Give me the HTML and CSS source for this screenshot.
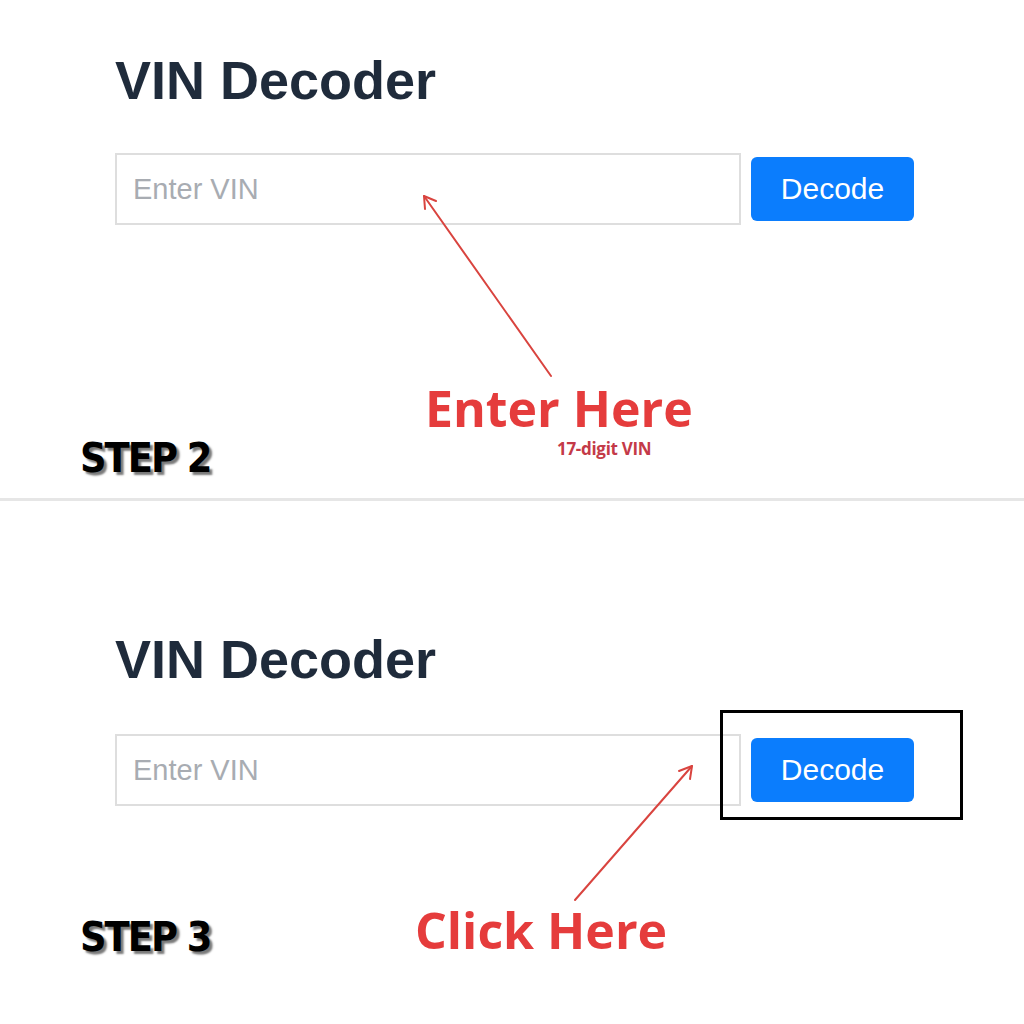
FILE: index.html
```html
<!DOCTYPE html>
<html lang="en">
<head>
    <meta charset="UTF-8">
    <meta name="viewport" content="width=device-width, initial-scale=1.0">
    <title>VIN Decoder Steps</title>
    <link rel="stylesheet" href="styles.css">
</head>
<body>
    <div class="page">
        <section class="step step-two">
            <h1 class="decoder-title">VIN Decoder</h1>
            <div class="decoder-form">
                <input class="vin-input" type="text" placeholder="Enter VIN">
                <button class="decode-btn">Decode</button>
            </div>
            <div class="callout callout-enter">
                <div class="callout-text">Enter Here</div>
                <div class="callout-note">17-digit VIN</div>
            </div>
            <div class="step-label">STEP 2</div>
        </section>

        <hr class="divider">

        <section class="step step-three">
            <h1 class="decoder-title">VIN Decoder</h1>
            <div class="decoder-form">
                <input class="vin-input" type="text" placeholder="Enter VIN">
                <button class="decode-btn">Decode</button>
            </div>
            <div class="highlight-box"></div>
            <div class="callout callout-click">
                <div class="callout-text">Click Here</div>
            </div>
            <div class="step-label">STEP 3</div>
        </section>

        <!-- red pointer arrows drawn over both panels -->
        <svg class="arrows" width="1024" height="1024" viewBox="0 0 1024 1024">
            <g fill="none" stroke="#d9443f" stroke-width="2" stroke-linecap="round">
                <path d="M551 376 L424 196"/>
                <path d="M424 196 L425 209 M424 196 L436 201"/>
                <path d="M575 900 L692 766"/>
                <path d="M692 766 L679 771 M692 766 L690 779"/>
            </g>
        </svg>
    </div>
</body>
</html>
```

FILE: styles.css
```css
body {
    margin: 0;
    padding: 0;
    background: #fff;
    font-family: "Liberation Sans", Arial, sans-serif;
}

.page {
    position: relative;
    width: 1024px;
    height: 1024px;
    overflow: hidden;
}

.step {
    position: relative;
    padding-left: 115px;
    box-sizing: border-box;
}

.step-two {
    height: 498px;
    padding-top: 53px;
}

.step-three {
    height: 523px;
    padding-top: 131px;
}

.decoder-title {
    margin: 0;
    font-size: 54px;
    line-height: 54px;
    font-weight: bold;
    color: #1f2b3b;
}

.decoder-form {
    display: flex;
    align-items: center;
    gap: 10px;
    margin-top: 46px;
}

.step-three .decoder-form {
    margin-top: 48px;
}

.vin-input {
    width: 626px;
    height: 72px;
    box-sizing: border-box;
    border: 2px solid #dedede;
    padding: 0 16px;
    font-family: "Liberation Sans", Arial, sans-serif;
    font-size: 29px;
    color: #333;
    outline: none;
}

.vin-input::placeholder {
    color: #a8acb2;
}

.decode-btn {
    width: 163px;
    height: 64px;
    border: none;
    border-radius: 6px;
    background: #0b7dfd;
    color: #fff;
    font-family: "Liberation Sans", Arial, sans-serif;
    font-size: 30px;
    cursor: pointer;
}

.divider {
    margin: 0;
    height: 3px;
    border: none;
    background: #e6e6e6;
}

.callout {
    position: absolute;
    font-family: "Open Sans", sans-serif;
    font-weight: 700;
    line-height: 1;
}

.callout-enter {
    left: 425px;
    top: 383px;
}

.callout-click {
    left: 415px;
    top: 404px;
}

.callout-text {
    font-size: 50px;
    color: #e53c3c;
}

.callout-note {
    margin-top: 7px;
    margin-left: 132px;
    font-size: 17px;
    letter-spacing: -0.3px;
    color: #c43a48;
}

.step-label {
    position: absolute;
    left: 80px;
    font-family: "DejaVu Sans Condensed", "DejaVu Sans", sans-serif;
    font-stretch: condensed;
    font-weight: bold;
    font-size: 41px;
    letter-spacing: -2px;
    line-height: 1;
    color: #000;
    text-shadow: 3px 3px 2px #7a7a7a;
}

.step-two .step-label {
    top: 438px;
}

.step-three .step-label {
    top: 416px;
}

.highlight-box {
    position: absolute;
    left: 720px;
    top: 209px;
    width: 243px;
    height: 110px;
    box-sizing: border-box;
    border: 3px solid #000;
}

.arrows {
    position: absolute;
    top: 0;
    left: 0;
    pointer-events: none;
}
```
